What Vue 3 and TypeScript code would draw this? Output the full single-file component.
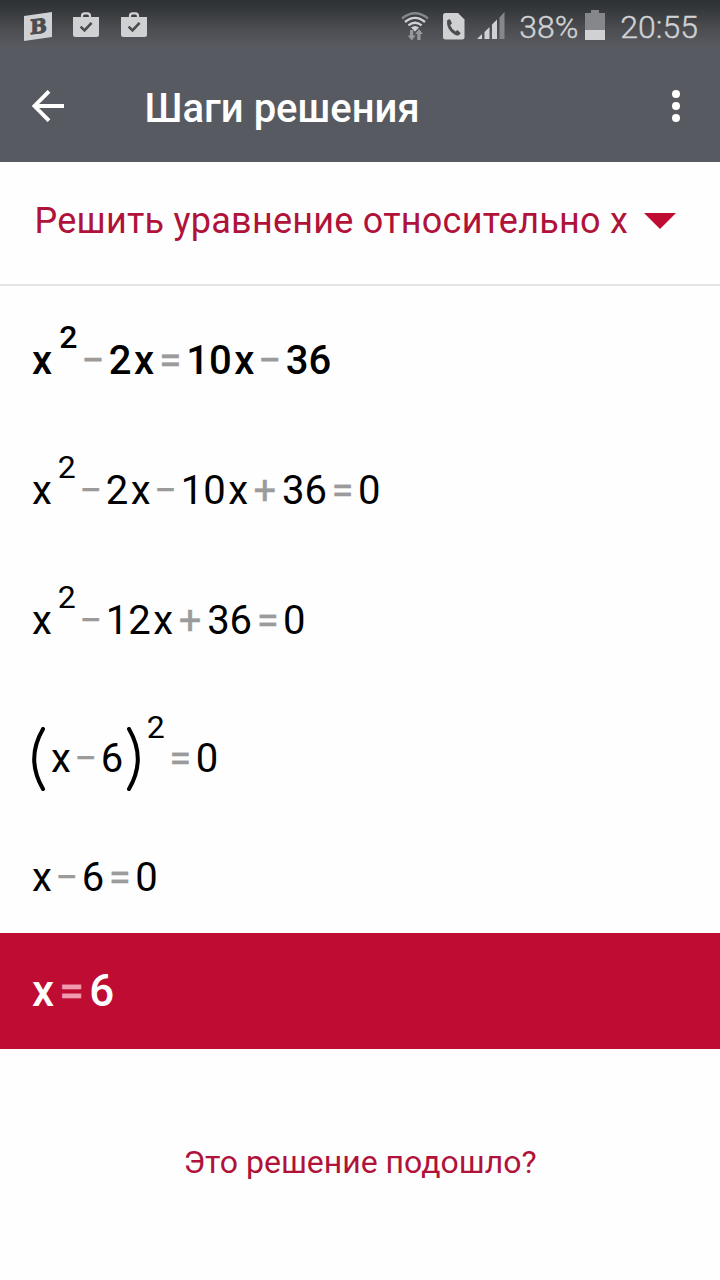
<script setup lang="ts">
type TokenKind = 'term' | 'var' | 'minus' | 'plus' | 'equals' | 'power' | 'open' | 'close'

interface Token {
  kind: TokenKind
  text: string
}

interface Step {
  id: string
  variant: string
  tokens: Token[]
}

const kinds: Record<string, TokenKind> = {
  x: 'var',
  '−': 'minus',
  '+': 'plus',
  '=': 'equals',
  '²': 'power',
  '(': 'open',
  ')': 'close',
}

function tokenize(source: string): Token[] {
  const parts = source.match(/\d+|./gu) ?? []
  return parts.map((part) => ({
    kind: kinds[part] ?? 'term',
    text: part === '²' ? '2' : part,
  }))
}

const steps: Step[] = [
  { id: 'given', variant: 'given', tokens: tokenize('x²−2x=10x−36') },
  { id: 'move', variant: 'plain', tokens: tokenize('x²−2x−10x+36=0') },
  { id: 'collect', variant: 'plain', tokens: tokenize('x²−12x+36=0') },
  { id: 'square', variant: 'grouped', tokens: tokenize('(x−6)²=0') },
  { id: 'root', variant: 'short', tokens: tokenize('x−6=0') },
  { id: 'answer', variant: 'answer', tokens: tokenize('x=6') },
]
</script>

<template>
  <div class="screen">
    <header class="top">
      <div class="status">
        <div class="notices">
          <svg class="notice-b" width="28" height="30" viewBox="0 0 28 30">
            <path d="M0 4L28 0V25L0 29Z" fill="#d0d1d3" />
            <text x="6" y="21.2" transform="skewY(-6) translate(0 1.8)" class="badge-letter">B</text>
          </svg>
          <svg v-for="n in 2" :key="n" class="bag" width="26" height="26" viewBox="0 0 26 26">
            <path d="M9 6V4Q9 1.4 11.5 1.4H14.5Q17 1.4 17 4V6" fill="none" stroke="#d0d1d3" stroke-width="2.2" />
            <path d="M0 5H26V22.5Q26 25 23.5 25H2.5Q0 25 0 22.5Z" fill="#d0d1d3" />
            <path d="M7.6 14.6L11.5 18.4L18.6 10.8" fill="none" stroke="#4b4d51" stroke-width="2.6" />
          </svg>
        </div>
        <div class="indicators">
          <svg class="wifi" width="28" height="29" viewBox="0 0 28 29">
            <g fill="none" stroke-width="2.3">
              <path d="M1 6.5Q14 -4 27 6.5" stroke="#85878a" />
              <path d="M4 10Q14 1.8 24 10M7.4 13.4Q14 8 20.6 13.4" stroke="#d0d1d3" />
            </g>
            <path d="M10 15.6Q14 12.6 18 15.6L14 19.4Z" fill="#d0d1d3" />
            <path d="M9 18H12.2V23.5H14.6L10.8 28.4L6.8 23.5H9Z" fill="#96989b" />
            <path d="M16.3 28V22H14.2L18 17L22 22H19.5V28Z" fill="#96989b" />
          </svg>
          <svg class="sim" width="22" height="27" viewBox="0 0 22 27">
            <path d="M2.5 0H15L21.5 6.5V24Q21.5 26.5 19 26.5H2.5Q0 26.5 0 24V2.5Q0 0 2.5 0Z" fill="#d0d1d3" />
            <path d="M4.2 7.2L6.8 6L9 10.3L7.2 12.2Q8.8 16.4 12.6 18.4L14.6 17L17.7 20.2L15.8 22.2Q12.6 23.3 8 18.7Q3 13.4 4.2 7.2Z" fill="#4b4d51" />
          </svg>
          <svg class="signal" width="28" height="28" viewBox="0 0 28 28">
            <path d="M0 27L5 22V27ZM7.5 20L12.5 15V27H7.5ZM15 12.5L20 7.5V27H15Z" fill="#d0d1d3" />
            <path d="M22.5 5.5L27.5 0V27H22.5Z" fill="#85878a" />
          </svg>
          <span class="percent">38%</span>
          <svg class="battery" width="20" height="30" viewBox="0 0 20 30">
            <path d="M6 0H14V3H20V20H0V3H6Z" fill="#85878a" />
            <path d="M0 20H20V30H0Z" fill="#d0d1d3" />
          </svg>
          <span class="clock">20:55</span>
        </div>
      </div>
      <div class="app-bar">
        <svg class="back" width="32" height="32" viewBox="0 0 32 32">
          <path d="M17 1.3L2.4 16L17 30.7M2.4 16H32" fill="none" stroke="#fff" stroke-width="3.9" />
        </svg>
        <h1 class="title">Шаги решения</h1>
        <svg class="more" width="8" height="32" viewBox="0 0 8 32">
          <circle cx="4" cy="4" r="4" fill="#fff" />
          <circle cx="4" cy="16" r="4" fill="#fff" />
          <circle cx="4" cy="28" r="4" fill="#fff" />
        </svg>
      </div>
    </header>

    <div class="method">
      <span class="method-label">Решить уравнение относительно x</span>
      <svg class="caret" width="32" height="16" viewBox="0 0 32 16">
        <path d="M0 0H32L16 16Z" fill="#be0c32" />
      </svg>
    </div>

    <main class="steps">
      <div v-for="step in steps" :key="step.id" class="step" :class="step.variant">
        <template v-for="(token, i) in step.tokens" :key="i">
          <svg v-if="token.kind === 'open'" class="paren open" width="13" height="64" viewBox="0 0 13 64">
            <path d="M11 2Q-6.6 32 11 62" />
          </svg>
          <svg v-else-if="token.kind === 'close'" class="paren close" width="13" height="64" viewBox="0 0 13 64">
            <path d="M2 2Q19.6 32 2 62" />
          </svg>
          <span v-else class="token" :class="token.kind">{{ token.text }}</span>
        </template>
      </div>
    </main>

    <footer class="feedback">Это решение подошло?</footer>
  </div>
</template>

<style>
body {
  margin: 0;
  background: #fff;
}
</style>

<style scoped>
.screen {
  width: 720px;
  height: 1280px;
  overflow: hidden;
  display: flex;
  flex-direction: column;
  background: #fefefe;
  font-family: Roboto, "Noto Sans", sans-serif;
  color: #000;
}

.top {
  height: 162px;
  flex: none;
  background: linear-gradient(#2e3133 0, #36393b 10px, #494b4f 27px, #585a61 46px);
}

.status {
  height: 50px;
  display: flex;
  justify-content: space-between;
  box-sizing: border-box;
  padding: 0 22px 0 24px;
  color: #d0d1d3;
}

.notices,
.indicators {
  display: flex;
  align-items: flex-start;
}

.notice-b {
  margin-top: 12px;
}

.badge-letter {
  font: 700 20px "DejaVu Serif", serif;
  fill: #4b4d51;
  stroke: #4b4d51;
  stroke-width: 1px;
}

.bag {
  margin: 12px 0 0 21px;
}

.bag + .bag {
  margin-left: 22px;
}

.wifi {
  margin: 12px 14px 0 0;
}

.sim {
  margin: 13px 12px 0 0;
}

.signal {
  margin: 12px 14px 0 0;
}

.percent,
.clock {
  font-size: 32px;
  line-height: 38px;
  margin-top: 8px;
  font-weight: 300;
  -webkit-text-stroke: 0.4px currentColor;
  white-space: nowrap;
}

.percent {
  width: 66px;
}

.battery {
  margin-top: 10px;
}

.clock {
  margin-left: 15px;
}

.app-bar {
  height: 112px;
  display: flex;
  align-items: center;
  box-sizing: border-box;
  padding: 0 40px 0 32px;
}

.title {
  margin: 5px 0 0 80.5px;
  flex: 1;
  font-size: 40px;
  line-height: 48px;
  font-weight: 500;
  color: #fff;
  white-space: nowrap;
}

.method {
  height: 124px;
  flex: none;
  box-sizing: border-box;
  display: flex;
  align-items: flex-start;
  padding: 35px 44px 0 34.5px;
  border-bottom: 2px solid #e4e4e4;
  color: #b0123a;
}

.method-label {
  flex: 1;
  font-size: 36px;
  line-height: 48px;
  letter-spacing: 0.25px;
  white-space: nowrap;
}

.caret {
  margin-top: 16px;
}

.steps {
  flex: none;
}

.step {
  display: flex;
  align-items: baseline;
  box-sizing: border-box;
  height: 130px;
  padding: 51px 32px 0;
  font-size: 40px;
  line-height: 48px;
  white-space: nowrap;
}

.token {
  flex: none;
}

.given,
.answer {
  font-weight: 500;
}

.grouped {
  padding-top: 59px;
}

.short {
  height: 127px;
  padding-top: 48px;
}

.power {
  font-size: 32px;
  margin-left: 6px;
  position: relative;
  top: -26px;
}

.given .power {
  margin-left: 7px;
}

.grouped .power {
  top: -34px;
  margin-left: 6.5px;
}

.minus,
.plus,
.equals {
  color: #9b9b9b;
  text-align: center;
  -webkit-text-stroke: 0.3px currentColor;
}

.given .minus,
.given .equals {
  font-weight: 400;
  -webkit-text-stroke-width: 0.7px;
}

.minus {
  width: 30px;
}

.given .minus {
  width: 31.5px;
}

.plus {
  width: 34px;
}

.equals {
  width: 31px;
}

.given .equals {
  width: 32px;
}

.term + .var {
  margin-left: 2.5px;
}

.paren {
  align-self: flex-start;
  margin-top: -8px;
  fill: none;
  stroke: #000;
  stroke-width: 4;
  stroke-linecap: round;
}

.open {
  margin-right: 6px;
}

.close {
  margin-left: 4px;
}

.answer {
  height: 116px;
  padding-top: 32px;
  font-size: 44px;
  line-height: 52px;
  background: #be0c32;
  color: #fff;
}

.answer .equals {
  width: 35px;
  color: #f29bb0;
}

.feedback {
  padding-top: 93px;
  text-align: center;
  font-size: 32px;
  line-height: 40px;
  color: #b0123a;
}
</style>
